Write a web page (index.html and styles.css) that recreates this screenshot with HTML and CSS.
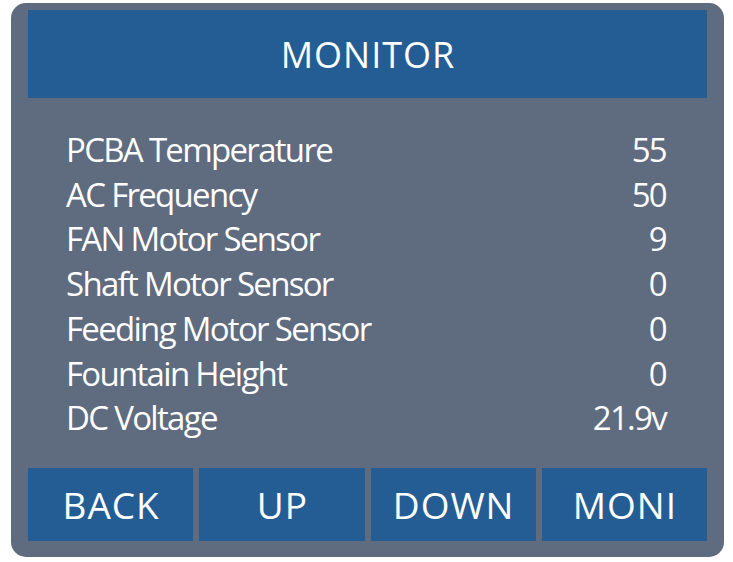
FILE: index.html
```html
<!DOCTYPE html>
<html>
<head>
<meta charset="utf-8">
<link rel="stylesheet" href="styles.css">
</head>
<body>
<div class="panel">
  <div class="header">MONITOR</div>
  <div class="rows">
    <div class="row"><span>PCBA Temperature</span><span>55</span></div>
    <div class="row"><span>AC Frequency</span><span>50</span></div>
    <div class="row"><span>FAN Motor Sensor</span><span>9</span></div>
    <div class="row"><span>Shaft Motor Sensor</span><span>0</span></div>
    <div class="row"><span>Feeding Motor Sensor</span><span>0</span></div>
    <div class="row"><span>Fountain Height</span><span>0</span></div>
    <div class="row"><span>DC Voltage</span><span>21.9v</span></div>
  </div>
  <div class="buttons">
    <div class="btn">BACK</div>
    <div class="btn">UP</div>
    <div class="btn">DOWN</div>
    <div class="btn">MONI</div>
  </div>
</div>
</body>
</html>
```
FILE: styles.css
```css
html, body {
  margin: 0;
  padding: 0;
  background: #ffffff;
}
body {
  width: 733px;
  height: 562px;
  font-family: "Open Sans", "Noto Sans", sans-serif;
  color: #ffffff;
}
.panel {
  box-sizing: border-box;
  margin: 3px 0 0 11px;
  width: 713px;
  height: 554px;
  background: #5f6b7e;
  border-radius: 15px;
  padding: 7px 17px 0 17px;
  display: flex;
  flex-direction: column;
}
.header {
  height: 88px;
  background: #235d93;
  display: flex;
  align-items: center;
  justify-content: center;
  font-size: 36px;
  letter-spacing: 1px;
  padding-left: 1px;
}
.rows {
  padding: 30px 41px 0 38px;
  height: 347px;
  box-sizing: border-box;
}
.row {
  display: flex;
  justify-content: space-between;
  font-size: 33px;
  line-height: 44.7px;
  letter-spacing: -1.7px;
}
.buttons {
  display: flex;
  gap: 6px;
  margin-top: 23px;
}
.btn {
  flex: 1;
  height: 73px;
  background: #235d93;
  display: flex;
  align-items: center;
  justify-content: center;
  font-size: 37px;
  letter-spacing: 1px;
  padding-left: 1px;
}
```
